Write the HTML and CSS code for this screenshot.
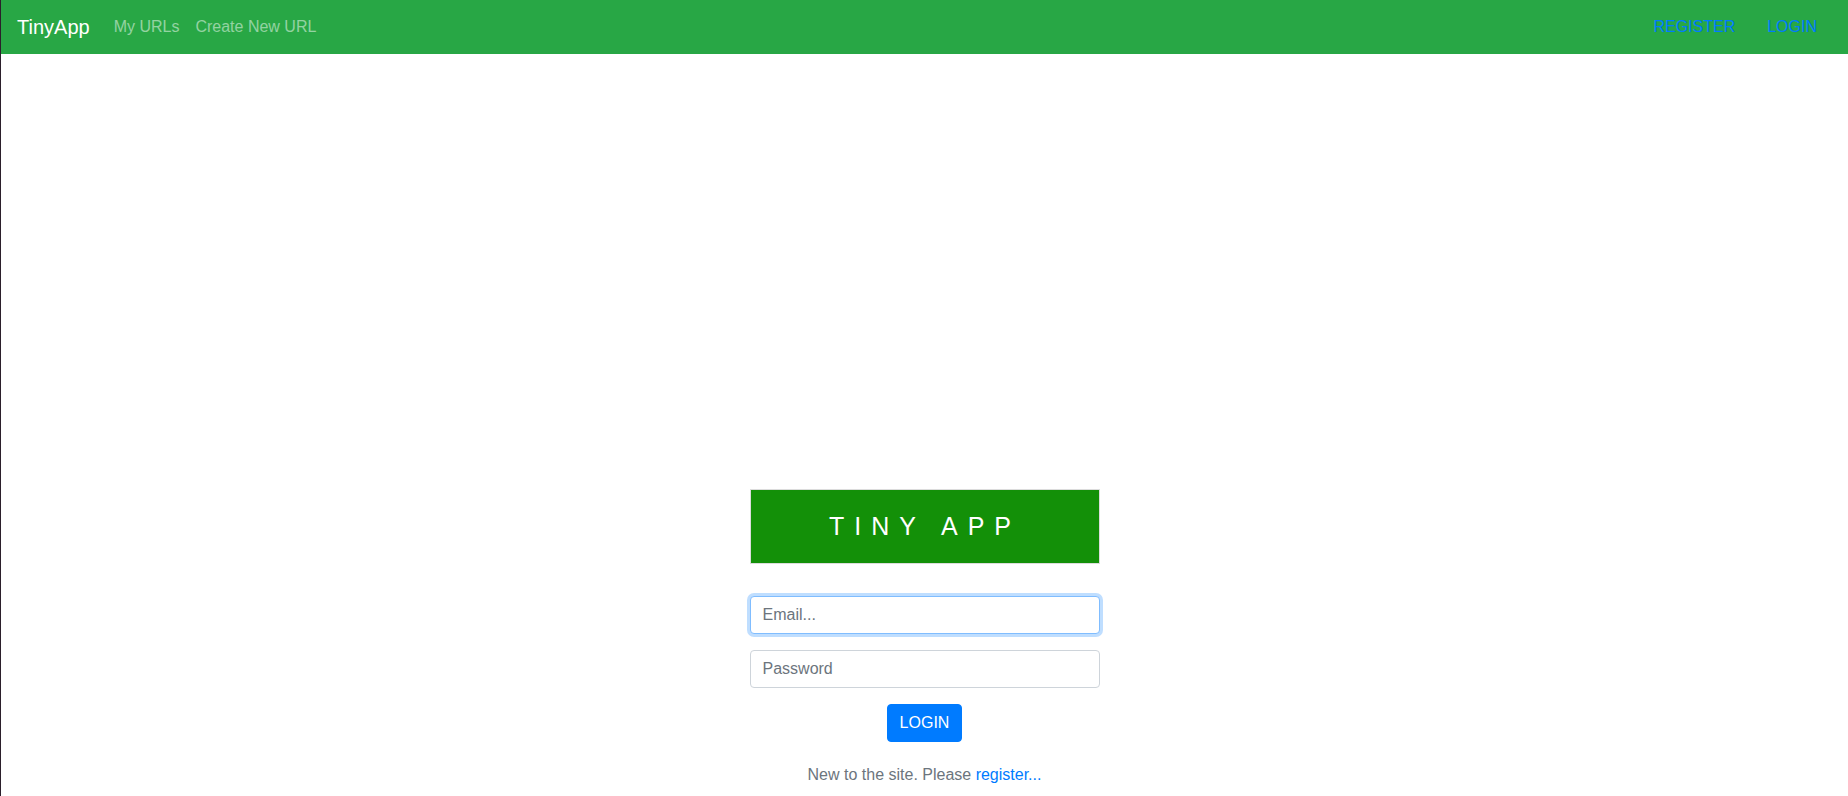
FILE: index.html
```html
<!DOCTYPE html>
<html lang="en">
<head>
<meta charset="utf-8">
<title>TinyApp</title>
<link rel="stylesheet" href="styles.css">
</head>
<body>
<div class="page">
  <nav class="navbar">
    <a class="brand" href="#">TinyApp</a>
    <ul class="nav-left">
      <li><a class="nav-link" href="#">My URLs</a></li>
      <li><a class="nav-link" href="#">Create New URL</a></li>
    </ul>
    <ul class="nav-right">
      <li><a class="nav-auth" href="#">REGISTER</a></li>
      <li><a class="nav-auth" href="#">LOGIN</a></li>
    </ul>
  </nav>
  <main class="main">
    <div class="login-card">
      <div class="banner">TINY APP</div>
      <form class="login-form">
        <input class="form-control focused" type="email" placeholder="Email..." autofocus>
        <input class="form-control" type="password" placeholder="Password">
        <button class="btn-login" type="button">LOGIN</button>
      </form>
      <p class="register-note">New to the site. Please <a href="#">register...</a></p>
    </div>
  </main>
</div>
</body>
</html>
```

FILE: styles.css
```css
* { box-sizing: border-box; }
html, body { margin: 0; padding: 0; height: 100%; }
body {
  font-family: "Liberation Sans", Arial, sans-serif;
  font-size: 16px;
  line-height: 1.5;
  color: #212529;
  background: #fff;
}
.page {
  min-height: 100%;
  border-left: 1px solid #2b1f2b;
}
.navbar {
  height: 54px;
  background: #28a745;
  display: flex;
  align-items: center;
  padding: 0 0 0 16px;
}
.brand {
  color: #fff;
  font-size: 20px;
  text-decoration: none;
  margin-right: 16px;
  line-height: 30px;
}
.nav-left, .nav-right {
  list-style: none;
  margin: 0;
  padding: 0;
  display: flex;
}
.nav-right { margin-left: auto; padding-right: 15px; }
.nav-link {
  display: block;
  padding: 8px;
  color: rgba(255,255,255,.5);
  text-decoration: none;
}
.nav-auth {
  display: block;
  padding: 8px 16px;
  color: #007bff;
  text-decoration: none;
}
.main {
  display: flex;
  justify-content: center;
  padding-top: 435px;
}
.login-card {
  width: 350px;
  display: flex;
  flex-direction: column;
  align-items: center;
}
.banner {
  width: 350px;
  height: 75px;
  background: #139008;
  border: 1px solid #dcdcdc;
  color: #fff;
  font-size: 25px;
  letter-spacing: 10px;
  padding-left: 1px;
  display: flex;
  align-items: center;
  justify-content: center;
  margin-bottom: 32px;
}
.login-form {
  width: 100%;
  display: flex;
  flex-direction: column;
  align-items: center;
}
.form-control {
  width: 100%;
  height: 38px;
  padding: 6px 12px;
  font-family: inherit;
  font-size: 16px;
  color: #495057;
  border: 1px solid #ced4da;
  border-radius: 4px;
  margin-bottom: 16px;
  outline: none;
  background: #fff;
}
.form-control::placeholder { color: #6c757d; opacity: 1; }
.form-control.focused {
  border-color: #80bdff;
  box-shadow: 0 0 0 3px rgba(0,123,255,.25);
}
.btn-login {
  height: 38px;
  padding: 6px 12px;
  font-family: inherit;
  font-size: 16px;
  color: #fff;
  background: #007bff;
  border: 1px solid #007bff;
  border-radius: 4px;
}
.register-note {
  margin: 21px 0 0;
  color: #6c757d;
  text-align: center;
}
.register-note a { color: #007bff; text-decoration: none; }
```
